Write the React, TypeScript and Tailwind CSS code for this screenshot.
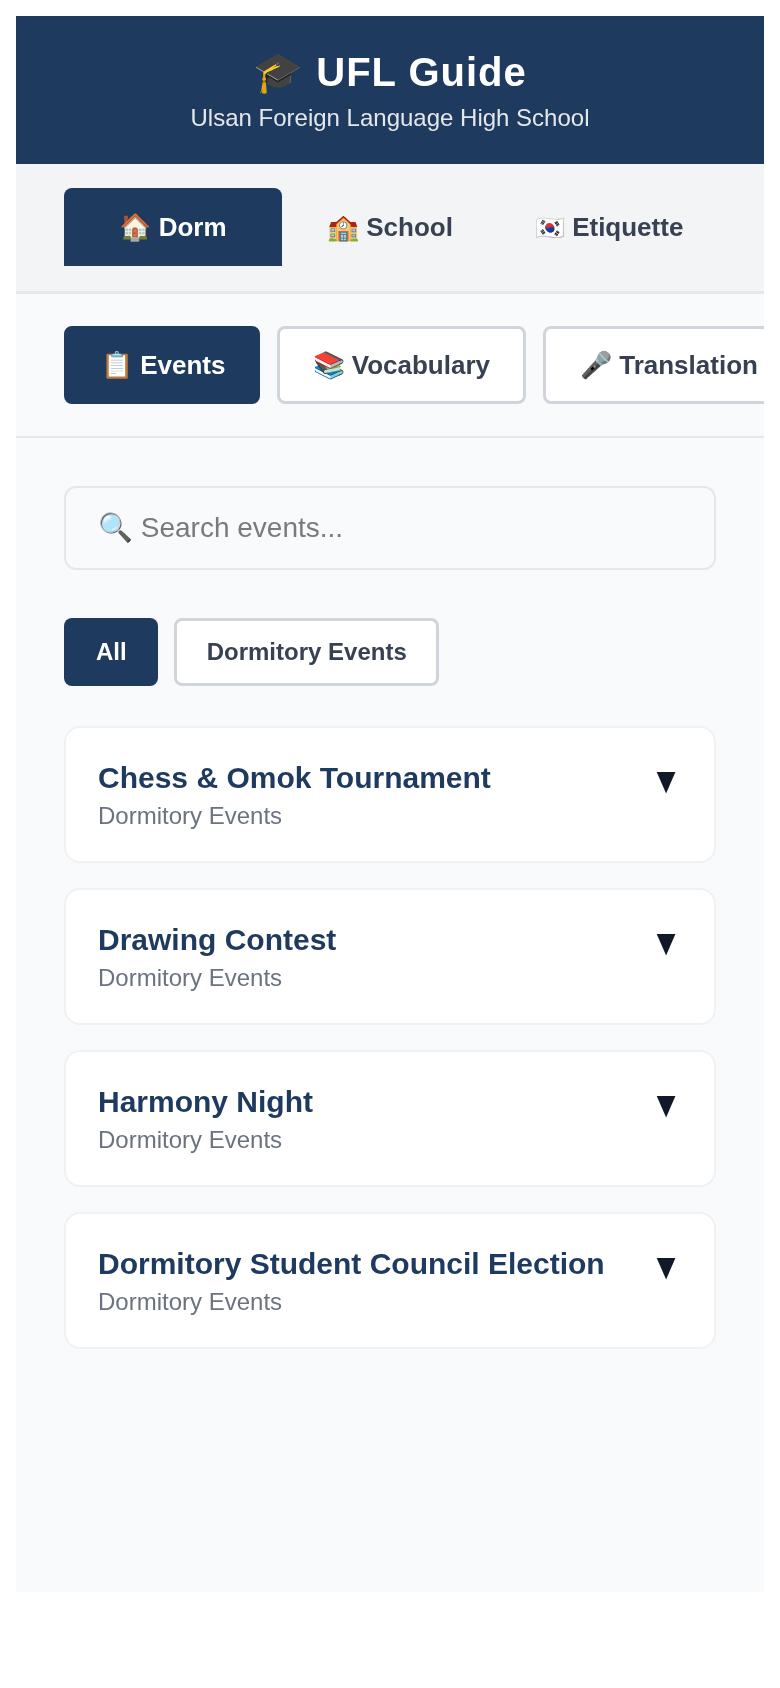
const items = ["Chess & Omok Tournament", "Drawing Contest", "Harmony Night", "Dormitory Student Council Election"];

export default function App() {
  const mainBase = "shrink-0 h-[78px] rounded-t-lg text-[26px] font-bold whitespace-nowrap";
  const subBase = "shrink-0 h-[78px] rounded-lg text-[26px] font-bold whitespace-nowrap border-[3px]";
  const subIdle = "bg-white border-[#d1d5db] text-[#374151]";
  return (
    <div className="p-4 bg-white font-['Liberation_Sans',sans-serif] blur-[0.5px]">
      <div className="w-[748px] h-[1576px] bg-[#f9fafb] overflow-hidden">
        <header className="h-[148px] bg-[#1e3a5f] text-white flex flex-col items-center">
          <h1 className="mt-[27px] text-[40px] leading-[59px] font-bold tracking-[1px]">🎓 UFL Guide</h1>
          <p className="text-[24px] leading-[32px] text-[#e5e7eb]">Ulsan Foreign Language High School</p>
        </header>
        <nav className="h-[130px] bg-[#f3f4f6] border-b-[3px] border-[#e5e7eb] pt-6 pl-12 flex items-start">
          <button className={`${mainBase} w-[218px] bg-[#1e3a5f] text-white`}>🏠 Dorm</button>
          <button className={`${mainBase} pl-[45px] pr-[37px] text-[#374151]`}>🏫 School</button>
          <button className={`${mainBase} pl-[45px] pr-[44px] text-[#374151]`}><span className="text-[24px]">🇰🇷</span> Etiquette</button>
        </nav>
        <div className="h-[144px] border-b-2 border-[#e5e7eb] pt-[32px] pl-12 flex items-start gap-[17px]">
          <button className={`${subBase} pl-[34px] pr-[31px] bg-[#1e3a5f] border-[#1e3a5f] text-white`}>📋 Events</button>
          <button className={`${subBase} pl-[33px] pr-[33px] ${subIdle}`}>📚 Vocabulary</button>
          <button className={`${subBase} pl-[34px] pr-[33px] ${subIdle}`}>🎤 Translation</button>
        </div>
        <main className="pt-[48px] px-12">
          <div className="h-[84px] rounded-xl border-2 border-[#e5e7eb] bg-[#f9fafb] flex items-center pl-[32px] text-[28px] text-[#7a7a7a]">
            🔍 Search events...
          </div>
          <div className="flex gap-4 mt-[48px]">
            <button className="h-[68px] pl-[32px] pr-[31px] rounded-lg bg-[#1e3a5f] text-white text-[24px] font-bold">All</button>
            <button className="h-[68px] pl-[30px] pr-[29px] rounded-lg bg-white border-[3px] border-[#d1d5db] text-[#374151] text-[24px] font-bold">Dormitory Events</button>
          </div>
          <div className="flex flex-col gap-[25px] mt-[40px]">
            {items.map((t) => (
              <div key={t} className="h-[137px] rounded-2xl bg-white border-2 border-[#f0f1f3] pl-8 pr-[32px] flex justify-between">
                <div className="pt-[28px]">
                  <div className="text-[30px] leading-[43px] font-bold text-[#1e3a5f]">{t}</div>
                  <div className="text-[24px] leading-[33px] text-[#6b7280]">Dormitory Events</div>
                </div>
                <div className="pt-[25px] text-[32px] leading-[54px] text-[#111827]"><span className="inline-block scale-y-[1.15]">▼</span></div>
              </div>
            ))}
          </div>
        </main>
      </div>
    </div>
  );
}
